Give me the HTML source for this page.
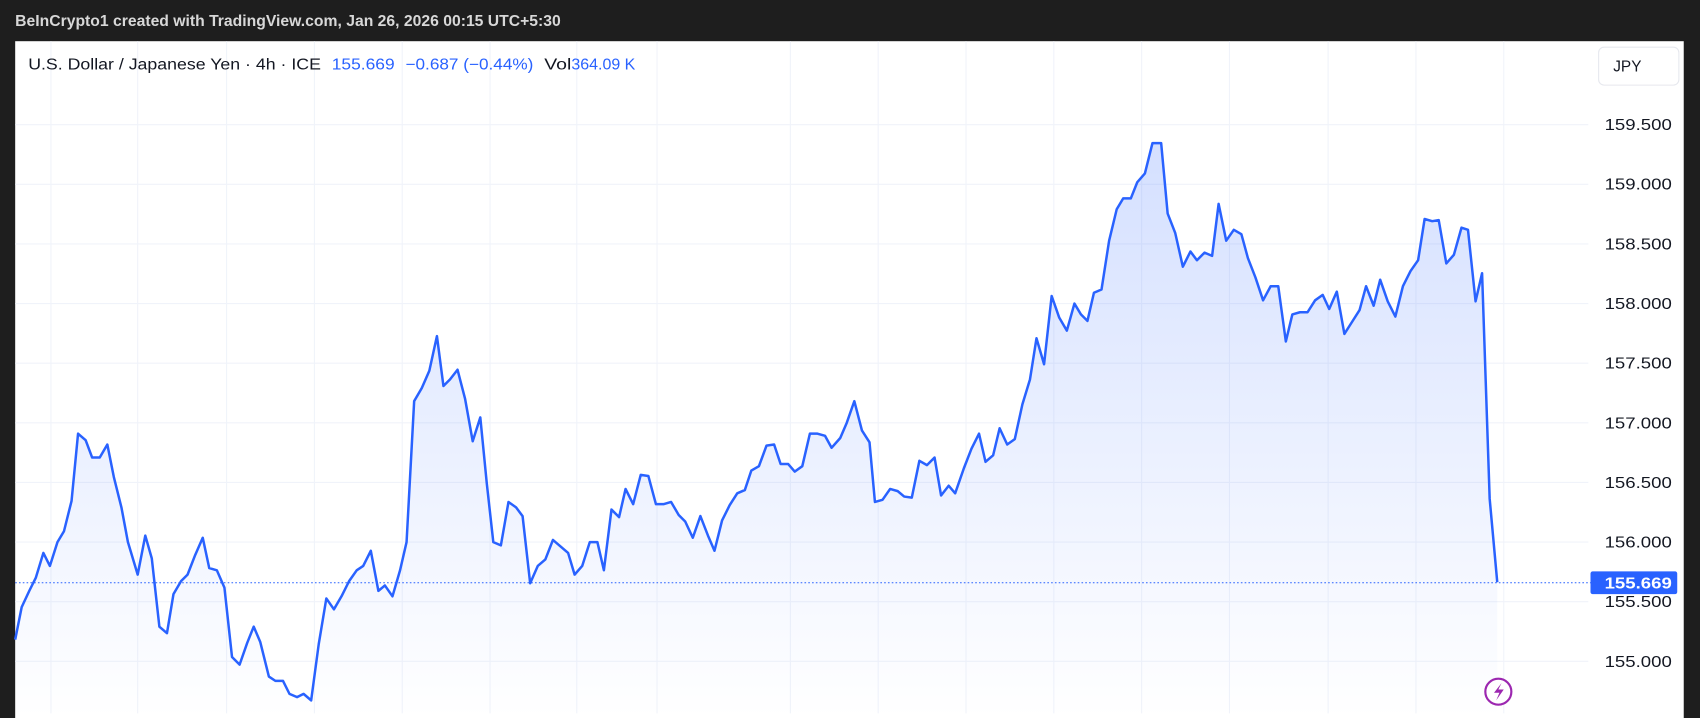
<!DOCTYPE html>
<html><head><meta charset="utf-8"><style>
html,body{margin:0;padding:0;background:#1e1e1e;width:1700px;height:718px;overflow:hidden}
svg{display:block}
text{font-family:"Liberation Sans","DejaVu Sans",sans-serif}
</style></head><body>
<svg width="1700" height="718" viewBox="0 0 1568 662.25" xmlns="http://www.w3.org/2000/svg">
<defs>
<linearGradient id="fill" gradientUnits="userSpaceOnUse" x1="0" y1="130" x2="0" y2="662">
<stop offset="0" stop-color="#2962ff" stop-opacity="0.2"/>
<stop offset="1" stop-color="#2962ff" stop-opacity="0.0"/>
</linearGradient>
</defs>
<rect x="0" y="0" width="1568" height="662.25" fill="#1e1e1e"/>
<text x="14" y="24" font-size="14.5" font-weight="bold" fill="#d8d8d8">BeInCrypto1 created with TradingView.com, Jan 26, 2026 00:15 UTC+5:30</text>
<rect x="14" y="38" width="1539" height="625" fill="#ffffff"/>
<g stroke="#f0f3fa" stroke-width="1">
<line x1="14" x2="1465" y1="115" y2="115"/><line x1="14" x2="1465" y1="170" y2="170"/>
<line x1="14" x2="1465" y1="225" y2="225"/><line x1="14" x2="1465" y1="280" y2="280"/>
<line x1="14" x2="1465" y1="335" y2="335"/><line x1="14" x2="1465" y1="390" y2="390"/>
<line x1="14" x2="1465" y1="445" y2="445"/><line x1="14" x2="1465" y1="500" y2="500"/>
<line x1="14" x2="1465" y1="555" y2="555"/><line x1="14" x2="1465" y1="610" y2="610"/>
<line y1="38" y2="658" x1="47" x2="47"/><line y1="38" y2="658" x1="127" x2="127"/>
<line y1="38" y2="658" x1="209" x2="209"/><line y1="38" y2="658" x1="290" x2="290"/>
<line y1="38" y2="658" x1="371" x2="371"/><line y1="38" y2="658" x1="452" x2="452"/>
<line y1="38" y2="658" x1="532" x2="532"/><line y1="38" y2="658" x1="606" x2="606"/>
<line y1="38" y2="658" x1="729" x2="729"/><line y1="38" y2="658" x1="810" x2="810"/>
<line y1="38" y2="658" x1="891" x2="891"/><line y1="38" y2="658" x1="972" x2="972"/>
<line y1="38" y2="658" x1="1053" x2="1053"/><line y1="38" y2="658" x1="1134" x2="1134"/>
<line y1="38" y2="658" x1="1225" x2="1225"/><line y1="38" y2="658" x1="1306" x2="1306"/>
<line y1="38" y2="658" x1="1387" x2="1387"/>
</g>
<path fill="url(#fill)" stroke="none" d="M14,590 L20,560 L27,545 L33,533 L40,510 L46,522 L53,500 L59,490 L66,462 L72,400 L79,406 L85,422 L92,422 L99,410 L105,440 L112,468 L118,500 L127,530 L134,494 L140,515 L147,578 L154,584 L160,548 L167,536 L173,530 L180,512 L187,496 L193,524 L200,526 L207,542 L214,606 L221,613 L228,593 L234,578 L240,592 L248,624 L254,628 L261,628 L267,640 L274,643 L280,640 L287,646 L294,594 L301,552 L308,562 L315,550 L322,536 L329,526 L335,522 L342,508 L349,545 L355,540 L362,550 L369,526 L375,500 L382,370 L389,358 L396,342 L403,310 L409,356 L415,350 L422,341 L429,368 L436,407 L443,385 L449,446 L455,500 L462,503 L469,463 L476,468 L482,476 L489,538 L496,522 L503,516 L510,498 L517,504 L524,510 L530,530 L537,522 L544,500 L551,500 L557,526 L564,470 L571,477 L577,451 L584,465 L591,438 L598,439 L605,465 L612,465 L619,463 L626,475 L632,481 L639,496 L646,476 L653,494 L659,508 L666,480 L673,466 L680,455 L687,452 L693,434 L700,430 L707,411 L714,410 L720,428 L727,428 L733,435 L740,430 L747,400 L754,400 L761,402 L767,413 L775,404 L781,390 L788,370 L795,397 L802,408 L807,463 L814,461 L821,451 L828,453 L834,458 L841,459 L848,425 L855,429 L862,422 L868,457 L875,448 L881,455 L889,432 L896,414 L903,400 L909,426 L916,420 L922,395 L929,410 L936,405 L943,373 L950,350 L956,312 L963,336 L970,273 L977,293 L984,305 L991,280 L997,290 L1003,296 L1009,270 L1016,267 L1023,222 L1030,193 L1036,183 L1043,183 L1049,168 L1056,160 L1063,132 L1071,132 L1077,197 L1084,215 L1091,246 L1098,232 L1104,240 L1111,233 L1118,236 L1124,188 L1131,222 L1138,212 L1145,216 L1151,238 L1158,256 L1165,277 L1172,264 L1179,264 L1186,315 L1192,290 L1199,288 L1206,288 L1213,277 L1220,272 L1226,285 L1233,269 L1240,308 L1247,297 L1254,286 L1260,264 L1267,282 L1273,258 L1280,278 L1287,292 L1294,264 L1301,250 L1308,240 L1314,202 L1321,204 L1327,203 L1334,243 L1341,235 L1348,210 L1354,212 L1361,278 L1367,252 L1374,460 L1381,537 L1381,662 L14,662 Z"/>
<path fill="none" stroke="#2962ff" stroke-width="2.3" stroke-linejoin="round" d="M14,590 L20,560 L27,545 L33,533 L40,510 L46,522 L53,500 L59,490 L66,462 L72,400 L79,406 L85,422 L92,422 L99,410 L105,440 L112,468 L118,500 L127,530 L134,494 L140,515 L147,578 L154,584 L160,548 L167,536 L173,530 L180,512 L187,496 L193,524 L200,526 L207,542 L214,606 L221,613 L228,593 L234,578 L240,592 L248,624 L254,628 L261,628 L267,640 L274,643 L280,640 L287,646 L294,594 L301,552 L308,562 L315,550 L322,536 L329,526 L335,522 L342,508 L349,545 L355,540 L362,550 L369,526 L375,500 L382,370 L389,358 L396,342 L403,310 L409,356 L415,350 L422,341 L429,368 L436,407 L443,385 L449,446 L455,500 L462,503 L469,463 L476,468 L482,476 L489,538 L496,522 L503,516 L510,498 L517,504 L524,510 L530,530 L537,522 L544,500 L551,500 L557,526 L564,470 L571,477 L577,451 L584,465 L591,438 L598,439 L605,465 L612,465 L619,463 L626,475 L632,481 L639,496 L646,476 L653,494 L659,508 L666,480 L673,466 L680,455 L687,452 L693,434 L700,430 L707,411 L714,410 L720,428 L727,428 L733,435 L740,430 L747,400 L754,400 L761,402 L767,413 L775,404 L781,390 L788,370 L795,397 L802,408 L807,463 L814,461 L821,451 L828,453 L834,458 L841,459 L848,425 L855,429 L862,422 L868,457 L875,448 L881,455 L889,432 L896,414 L903,400 L909,426 L916,420 L922,395 L929,410 L936,405 L943,373 L950,350 L956,312 L963,336 L970,273 L977,293 L984,305 L991,280 L997,290 L1003,296 L1009,270 L1016,267 L1023,222 L1030,193 L1036,183 L1043,183 L1049,168 L1056,160 L1063,132 L1071,132 L1077,197 L1084,215 L1091,246 L1098,232 L1104,240 L1111,233 L1118,236 L1124,188 L1131,222 L1138,212 L1145,216 L1151,238 L1158,256 L1165,277 L1172,264 L1179,264 L1186,315 L1192,290 L1199,288 L1206,288 L1213,277 L1220,272 L1226,285 L1233,269 L1240,308 L1247,297 L1254,286 L1260,264 L1267,282 L1273,258 L1280,278 L1287,292 L1294,264 L1301,250 L1308,240 L1314,202 L1321,204 L1327,203 L1334,243 L1341,235 L1348,210 L1354,212 L1361,278 L1367,252 L1374,460 L1381,537"/>
<line x1="14" x2="1467" y1="537.5" y2="537.5" stroke="#2962ff" stroke-width="1" stroke-dasharray="1.5,2"/>
<g font-size="14.5">
<text x="26" y="64" fill="#131722" textLength="270" lengthAdjust="spacingAndGlyphs">U.S. Dollar / Japanese Yen · 4h · ICE</text>
<text x="306" y="64" fill="#2962ff" textLength="58" lengthAdjust="spacingAndGlyphs">155.669</text>
<text x="374" y="64" fill="#2962ff" textLength="118" lengthAdjust="spacingAndGlyphs">−0.687 (−0.44%)</text>
<text x="502" y="64" fill="#131722" textLength="25" lengthAdjust="spacingAndGlyphs">Vol</text>
<text x="527" y="64" fill="#2962ff" textLength="59" lengthAdjust="spacingAndGlyphs">364.09 K</text>
</g>
<rect x="1474.5" y="43.5" width="74" height="35" rx="5" fill="#fff" stroke="#e6e8ee"/>
<text x="1488" y="66" font-size="14.5" fill="#131722" textLength="26" lengthAdjust="spacingAndGlyphs">JPY</text>
<g font-size="14.5" fill="#131722">
<text x="1480" y="120" textLength="62" lengthAdjust="spacingAndGlyphs">159.500</text><text x="1480" y="175" textLength="62" lengthAdjust="spacingAndGlyphs">159.000</text>
<text x="1480" y="230" textLength="62" lengthAdjust="spacingAndGlyphs">158.500</text><text x="1480" y="285" textLength="62" lengthAdjust="spacingAndGlyphs">158.000</text>
<text x="1480" y="340" textLength="62" lengthAdjust="spacingAndGlyphs">157.500</text><text x="1480" y="395" textLength="62" lengthAdjust="spacingAndGlyphs">157.000</text>
<text x="1480" y="450" textLength="62" lengthAdjust="spacingAndGlyphs">156.500</text><text x="1480" y="505" textLength="62" lengthAdjust="spacingAndGlyphs">156.000</text>
<text x="1480" y="560" textLength="62" lengthAdjust="spacingAndGlyphs">155.500</text><text x="1480" y="615" textLength="62" lengthAdjust="spacingAndGlyphs">155.000</text>
</g>
<rect x="1467" y="527" width="80" height="21" rx="2" fill="#2962ff"/>
<text x="1480" y="543" font-size="14.5" font-weight="bold" fill="#fff" textLength="62" lengthAdjust="spacingAndGlyphs">155.669</text>
<circle cx="1382" cy="638" r="12" fill="#fff" stroke="#9c27b0" stroke-width="2"/>
<path d="M1385,630 L1378,639 L1383,639 L1380,646 L1387,636 L1382,636 Z" fill="#9c27b0"/>
</svg>
</body></html>
